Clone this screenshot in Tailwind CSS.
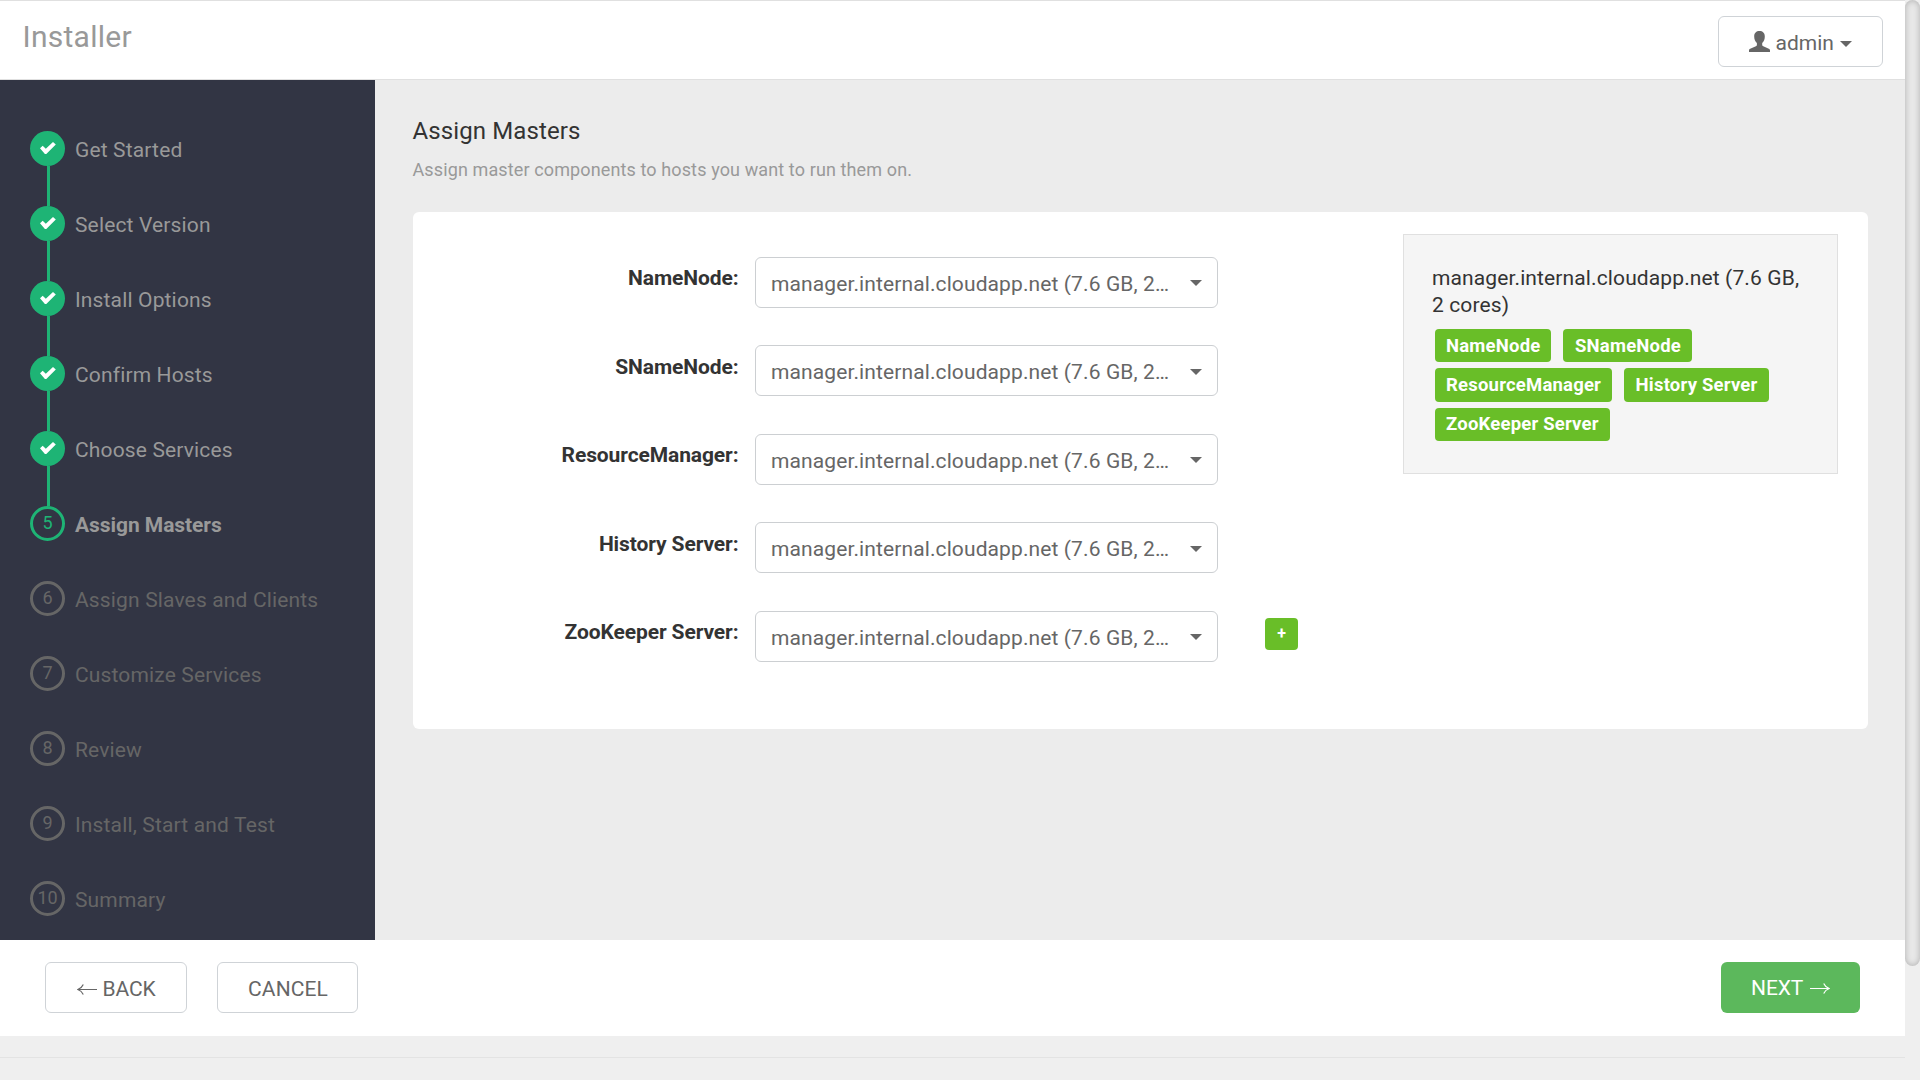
<!DOCTYPE html>
<html lang="en">
<head>
<meta charset="utf-8">
<title>Installer</title>
<script src="https://cdn.jsdelivr.net/npm/@tailwindcss/browser@4"></script>
</head>
<body class="flex h-screen overflow-hidden bg-[#efefef] font-[Roboto,sans-serif] text-[21px] leading-[27px] text-[#333]">
  <div class="flex w-[1905px] flex-col">
    <header class="flex h-[80px] shrink-0 items-start justify-between border-t border-b border-[#e0e0e0] bg-white pr-[22px] pl-[22.5px]">
      <h1 class="pt-[18px] text-[30px] leading-9 tracking-[0.27px] text-[#999]">Installer</h1>
      <button class="mt-[15px] flex h-[51px] w-[165px] items-center rounded-md border border-[#cfd3d7] pt-[3px] pl-[30px] text-[#666]">
        <svg class="-mt-[4px] mr-[5.5px] h-[21px] w-[21px]" viewBox="0 0 21 21" fill="currentColor"><path d="M10.5 0C7.300 0 5.200 1.900 5.200 5.500C5.200 8.500 6.200 10.500 7.900 12.100V13.900C7.900 14.500 7.500 14.900 6.900 15.200L1.200 17.800C.300 18.200 0 18.700 0 19.500V21H21V19.500C21 18.700 20.700 18.200 19.800 17.800L14.300 15.200C13.600 14.900 13.200 14.500 13.200 13.900V12.100C14.900 10.500 15.800 8.500 15.800 5.500C15.800 1.900 13.700 0 10.500 0Z"/></svg>
        <span class="pt-px">admin</span>
        <svg class="mt-[1px] ml-[6.5px] h-[6px] w-3" viewBox="0 0 12 6" fill="currentColor"><path d="M0 0H12L6 6Z"/></svg>
      </button>
    </header>

    <div class="flex h-[860px] shrink-0">
      <nav class="w-[375px] shrink-0 bg-[#323544] pt-[51px] pl-[30px]">
        <ol id="steps" class="tracking-[0.15px]"></ol>
      </nav>
      <main class="flex-1 bg-[#ececec] pt-[35px] pr-[37px] pl-[37.5px]">
        <h2 class="text-[24px] leading-8 tracking-[0.120px]">Assign Masters</h2>
        <p class="mt-[11px] text-[18px] leading-6 tracking-[0.120px] text-[#999]">Assign master components to hosts you want to run them on.</p>
        <section class="mt-[30px] flex h-[517px] items-start justify-between rounded-md bg-white pt-[22px] pr-[30px]">
          <div id="masters" class="flex flex-col gap-[37.5px] pt-[22.800px]"></div>
          <aside class="h-[240px] w-[435px] border border-[#e0e0e0] bg-[#f5f5f5] px-[28px] pt-[30px]">
            <p class="tracking-[0.12px]">manager.internal.cloudapp.net (7.6 GB, 2 cores)</p>
            <div id="badges" class="mt-[10px] ml-[2.500px] flex flex-wrap gap-x-3 gap-y-[6px]"></div>
          </aside>
        </section>
      </main>
    </div>

    <footer class="flex h-24 shrink-0 items-start bg-white px-[45px] pt-[22px] text-[#666]">
      <button class="flex h-[51px] w-[142px] items-center rounded-md border border-[#cfd3d7] pt-[3px] pl-[30.5px]">
        <svg class="mr-[6px] h-[11px] w-5" viewBox="0 0 20 11" fill="none" stroke="currentColor" stroke-width="1.200"><path d="M20 5.500H.800M6.300 .500Q4.800 4 .800 5.500Q4.800 7 6.300 10.500"/></svg>
        <span class="pt-px tracking-[-0.100px]">BACK</span>
      </button>
      <button class="ml-[30px] h-[51px] w-[141px] rounded-md border border-[#cfd3d7] pt-[4px] pl-px tracking-[0.1px]">CANCEL</button>
      <button class="ml-auto flex h-[51px] w-[139px] items-center rounded-md bg-[#5cb85c] pt-px pl-[30px] text-white">
        <span class="pt-px tracking-[-0.1px]">NEXT</span>
        <svg class="ml-[6.5px] h-[11px] w-5" viewBox="0 0 20 11" fill="none" stroke="currentColor" stroke-width="1.200"><path d="M0 5.500H19.200M13.700 .500Q15.200 4 19.200 5.500Q15.200 7 13.700 10.500"/></svg>
      </button>
    </footer>
    <div class="h-[22px] shrink-0 border-b border-[#e3e3e3]"></div>
  </div>

  <!-- page scrollbar -->
  <div class="w-[15px] bg-[#efefef]">
    <div class="h-[966px] rounded-full bg-[#e8e8e8] shadow-[inset_0_0_6px_rgba(0,0,0,0.25)]"></div>
  </div>

<script>
const steps = ['Get Started', 'Select Version', 'Install Options', 'Confirm Hosts', 'Choose Services', 'Assign Masters', 'Assign Slaves and Clients', 'Customize Services', 'Review', 'Install, Start and Test', 'Summary'];
const current = 5;
const check = '<svg class="ml-px h-[12px] w-4" viewBox="0 0 16 12"><path d="M0 6.300L2.700 3.800L5.800 6.700L13 0L15.800 2.600L6.300 11.900H4.900Z" fill="#fff"/></svg>';
document.getElementById('steps').innerHTML = steps.map((name, i) => {
  const done = i < current, active = i === current;
  const circle = done ? 'pb-px bg-[#1eb475]' : active ? 'pb-[2px] border-[3px] border-[#1eb475] text-[#1eb475]' : 'pb-[2px] border-[3px] border-[#666] text-[#666]';
  const text = done ? 'text-[#999]' : active ? 'font-bold tracking-[-0.060px] text-[#999]' : 'text-[#666]';
  return `<li class="flex h-[75px] items-start">
    <div class="flex w-[35px] flex-col items-center">
      <span class="flex h-[35px] w-[35px] shrink-0 items-center justify-center rounded-full text-[18px] tracking-normal ${circle}">${done ? check : i}</span>
      ${done ? '<span class="ml-[2px] h-10 w-[3px] bg-[#1eb475]"></span>' : ''}
    </div>
    <span class="pt-[6px] pl-[10px] ${text}">${name}</span>
  </li>`;
}).join('');

const masters = ['NameNode', 'SNameNode', 'ResourceManager', 'History Server', 'ZooKeeper Server'];
document.getElementById('masters').innerHTML = masters.map((name, i) => `<div class="flex h-[51px] items-start">
    <label class="w-[326px] pt-[8.400px] text-right font-bold tracking-[-0.100px]">${name}:</label>
    <div class="ml-[16.500px] flex h-[51px] w-[463px] items-center rounded-md border border-[#cccfd2] pt-[2px] pr-[15px] pl-[15px] text-[#666]">
      <span class="mt-[2px] w-[400px] overflow-hidden whitespace-nowrap leading-[21px] tracking-[0.110px]">manager.internal.cloudapp.net (7.6 GB, 2…</span>
      <svg class="ml-auto h-[6px] w-3" viewBox="0 0 12 6" fill="currentColor"><path d="M0 0H12L6 6Z"/></svg>
    </div>
    ${i === 4 ? '<button class="mt-[7px] ml-[47px] flex h-8 w-[33px] items-center justify-center rounded bg-[#69be28] pb-px text-[16px] font-bold text-white">+</button>' : ''}
  </div>`).join('');

document.getElementById('badges').innerHTML = masters.map(name => `<span class="h-[33.300px] rounded bg-[#69be28] pr-[11px] pl-[11.500px] pt-[3.700px] text-[18.500px] font-bold tracking-[0.200px] text-white">${name}</span>`).join('');
</script>
</body>
</html>
